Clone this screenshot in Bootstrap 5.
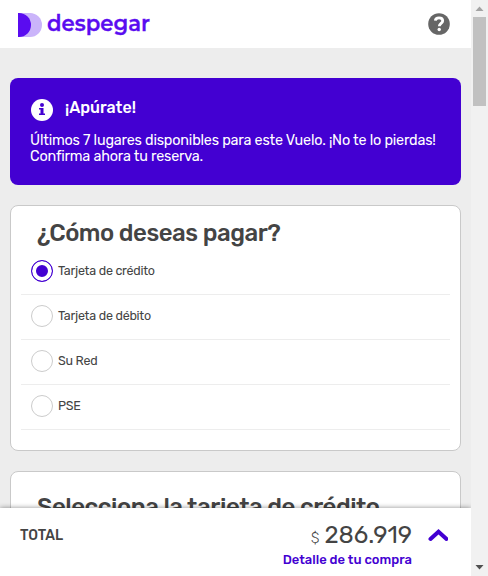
<!DOCTYPE html>
<html lang="es">
<head>
<meta charset="utf-8">
<meta name="viewport" content="width=device-width, initial-scale=1">
<title>Despegar - Pago</title>
<link href="https://cdn.jsdelivr.net/npm/bootstrap@5.3.0/dist/css/bootstrap.min.css" rel="stylesheet">
<style>
  body { font-family: Rubik, Roboto, "Liberation Sans", sans-serif; color: #444; background: #ededed; height: 576px; }
  svg { display: block; flex: none; }
  .medium { font-weight: 500; }
  .page-area { width: 471px; }
  .topbar { height: 48px; padding: 0 21px 0 18px; }
  .content-area { padding: 30px 10px 0; min-height: 0; gap: 20px; }
  .content-area > * { flex: none; }
  .notice { height: 107px; background: #4300d2; border-radius: 8px; padding: 19px 20px 0; }
  .notice-title { font-size: 16px; line-height: 20px; margin-left: 12px; padding-top: 1px; }
  .notice-text { font-size: 14.4px; line-height: 16px; margin-top: 12px; letter-spacing: -.19px; white-space: nowrap; }
  .pay-panel { height: 246px; border: 1px solid #c9c9c9; border-radius: 8px; padding: 13px 10px 0; }
  .pay-panel.next { padding-top: 21px; }
  .panel-title { font-size: 24px; line-height: 28px; margin: 0 0 3px 16px; letter-spacing: -.47px; white-space: nowrap; }
  .pay-row { height: 45px; border-bottom: 1px solid #ededed; padding: 0 0 2px 10px; font-size: 12.5px; letter-spacing: -.25px; cursor: pointer; color: #444; }
  .pay-row .form-check-input { width: 22px; height: 22px; margin: 0 5px 0 0; border: 1px solid #ccc; flex: none; }
  .pay-row .form-check-input:checked { border-color: #4300d2; background: #4300d2; box-shadow: inset 0 0 0 4px #fff; }
  .total-bar { height: 68px; box-shadow: 0 0 5px rgba(0,0,0,.45); padding: 0 23px 0 20px; z-index: 2; clip-path: inset(-8px 0 0 0); }
  .total-label { font-size: 14px; line-height: 20px; padding-top: 18px; }
  .amount { font-size: 24px; line-height: 28px; padding-top: 13px; }
  .currency { font-size: 14px; margin-right: 5px; font-weight: 300; }
  .detail-link { font-size: 13px; line-height: 16px; color: #4300d2; margin-top: -1px; }
  .scroll-track { width: 17px; background: #f1f1f1; }
  .scroll-thumb { width: 13px; height: 89px; background: #c1c1c1; }
  .word { font-family: Montserrat, Poppins, Quicksand, Lato, sans-serif; font-weight: 600; font-size: 22px; }
</style>
</head>
<body class="d-flex overflow-hidden">
<div class="page-area d-flex flex-column h-100 overflow-hidden">
  <header class="topbar bg-white d-flex align-items-center justify-content-between flex-shrink-0">
    <svg width="134" height="48" viewBox="0 0 134 48" role="img" aria-label="despegar">
      <path d="M0 13h12a12 12 0 0 1 0 24H0z" fill="#cab4fa"/>
      <path d="M1 13a12 12 0 0 1 0 24H0V13z" fill="#5a0cf0"/>
      <text class="word" x="29" y="31" textLength="103" lengthAdjust="spacingAndGlyphs" fill="#5a0cf0" stroke="#5a0cf0" stroke-width=".3">despegar</text>
    </svg>
    <svg width="22" height="22" viewBox="0 0 22 22" aria-label="Ayuda">
      <circle cx="11" cy="11" r="10.8" fill="#666"/>
      <path d="M7.3 7.7C7.5 5.8 9 4.8 11 4.800c2.200 0 3.700 1.100 3.700 2.900 0 2.800-3.400 2.600-3.400 5.600" fill="none" stroke="#fff" stroke-width="2.800"/>
      <circle cx="11.200" cy="16.500" r="1.700" fill="#fff"/>
    </svg>
  </header>
  <main class="content-area d-flex flex-column flex-fill overflow-hidden">
    <section class="notice text-white">
      <div class="d-flex">
        <svg width="23" height="24" viewBox="0 0 23 24">
          <circle cx="12" cy="13" r="11" fill="#fff"/>
          <circle cx="12" cy="8" r="2" fill="#4300d2"/>
          <path d="M9 11h4.500v5.500H15V18H9v-1.500h1.500v-4H9z" fill="#4300d2"/>
        </svg>
        <div class="notice-title medium">¡Apúrate!</div>
      </div>
      <div class="notice-text">Últimos 7 lugares disponibles para este Vuelo. ¡No te lo pierdas!<br>Confirma ahora tu reserva.</div>
    </section>
    <section class="pay-panel bg-white">
      <h1 class="panel-title medium">¿Cómo deseas pagar?</h1>
      <label class="pay-row d-flex align-items-center"><input class="form-check-input rounded-circle" type="radio" name="pago" checked>Tarjeta de crédito</label>
      <label class="pay-row d-flex align-items-center"><input class="form-check-input rounded-circle" type="radio" name="pago">Tarjeta de débito</label>
      <label class="pay-row d-flex align-items-center"><input class="form-check-input rounded-circle" type="radio" name="pago">Su Red</label>
      <label class="pay-row d-flex align-items-center"><input class="form-check-input rounded-circle" type="radio" name="pago">PSE</label>
    </section>
    <section class="pay-panel next bg-white">
      <h2 class="panel-title medium">Selecciona la tarjeta de crédito</h2>
    </section>
  </main>
  <footer class="total-bar bg-white d-flex flex-shrink-0 position-relative">
    <div class="total-label medium me-auto">TOTAL</div>
    <div class="text-end">
      <div class="amount"><span class="currency">$</span>286.919</div>
      <div class="detail-link medium">Detalle de tu compra</div>
    </div>
    <svg class="ms-3" width="20" height="42" viewBox="0 0 20 42"><path d="M2.500 31l8-7.300 8 7.300" fill="none" stroke="#4300d2" stroke-width="4" stroke-linecap="round"/></svg>
  </footer>
</div>
<aside class="scroll-track d-flex flex-column align-items-center h-100">
  <svg width="17" height="17"><path d="M4.500 11h8l-4-4.500z" fill="#a3a3a3"/></svg>
  <div class="scroll-thumb"></div>
  <svg class="mt-auto" width="17" height="17"><path d="M4.500 6h8l-4 4.500z" fill="#505050"/></svg>
</aside>
<script src="https://cdn.jsdelivr.net/npm/bootstrap@5.3.0/dist/js/bootstrap.bundle.min.js"></script>
</body>
</html>
